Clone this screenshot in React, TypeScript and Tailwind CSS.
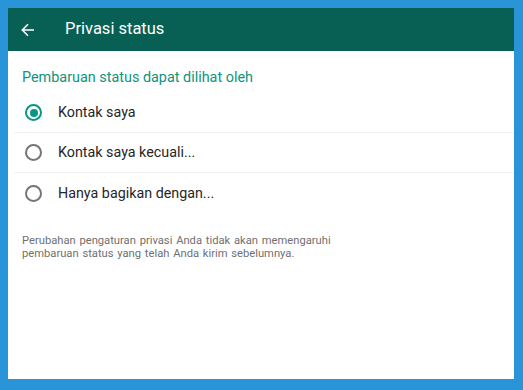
import React, { useState } from 'react';

const options = ['Kontak saya', 'Kontak saya kecuali...', 'Hanya bagikan dengan...'];

const Radio: React.FC<{ checked: boolean }> = ({ checked }) => (
    <span
        className={`flex items-center justify-center w-[17px] h-[17px] rounded-full border-2 ${
            checked ? 'border-[#0b9582]' : 'border-[#757575]'
        }`}
    >
        {checked && <span className="w-[8px] h-[8px] rounded-full bg-[#0b9582]" />}
    </span>
);

const App: React.FC = () => {
    const [selected, setSelected] = useState(0);

    return (
        <div className="w-[523px] h-[390px] bg-[#2a94d8] pt-[8px] pl-[8px] pr-[9px] pb-[11px] font-['Roboto',sans-serif]">
            <div className="bg-white h-full flex flex-col">
                <div className="h-[43px] bg-[#085f54] flex items-center shrink-0">
                    <button className="w-[40px] pl-[13px] flex items-center text-white">
                        <svg width="14" height="14" viewBox="0 0 14 14" fill="none" stroke="currentColor" strokeWidth="1.6">
                            <path d="M13 7H1.5M7 1.2 1.3 7 7 12.8" />
                        </svg>
                    </button>
                    <h1 className="ml-[17px] text-white text-[16.5px] leading-none">Privasi status</h1>
                </div>

                <p className="mt-[20px] ml-[14px] text-[14.4px] leading-none text-[#0e9480]">
                    Pembaruan status dapat dilihat oleh
                </p>

                <div className="mt-[8px] pl-[6px]">
                    {options.map((label, i) => (
                        <div
                            key={label}
                            onClick={() => setSelected(i)}
                            className={`h-[40px] flex items-center cursor-pointer ${
                                i < options.length - 1 ? 'border-b border-[#f0f0f0]' : ''
                            }`}
                        >
                            <span className="ml-[11px]">
                                <Radio checked={selected === i} />
                            </span>
                            <span className="ml-[16px] text-[14.3px] text-[#262626]">{label}</span>
                        </div>
                    ))}
                </div>

                <p className="mt-[21px] ml-[14px] text-[11.2px] [word-spacing:1px] leading-[13px] text-[#707070]">
                    Perubahan pengaturan privasi Anda tidak akan memengaruhi
                    <br />
                    pembaruan status yang telah Anda kirim sebelumnya.
                </p>
            </div>
        </div>
    );
};

export default App;
